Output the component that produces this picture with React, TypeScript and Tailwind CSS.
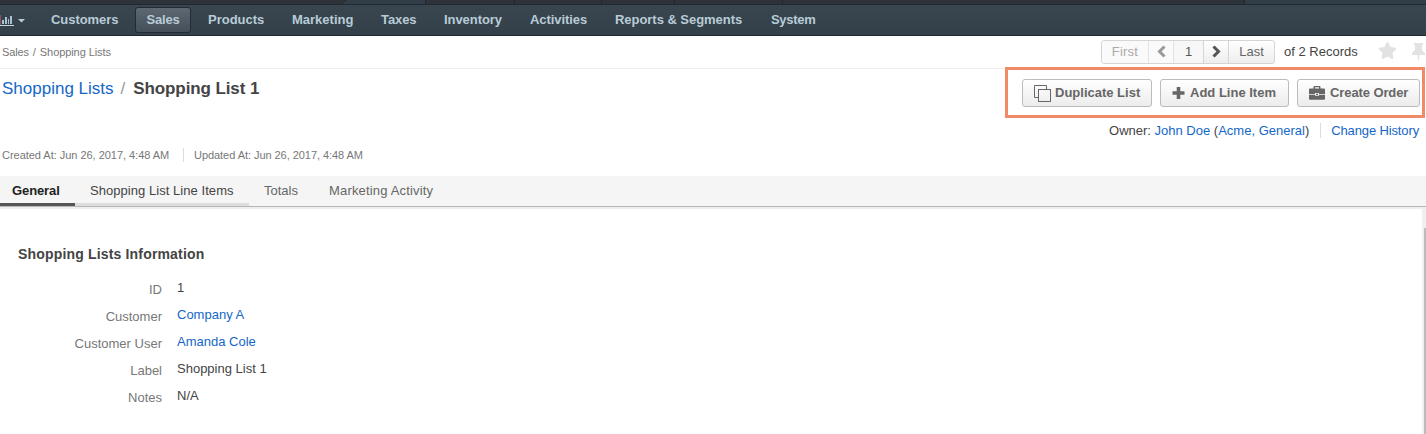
import React from "react";
import { FaStar } from "react-icons/fa";

const nav = [
  { label: "Products", w: "w-[84px]" },
  { label: "Marketing", w: "w-[89px]" },
  { label: "Taxes", w: "w-[63px] tracking-[-0.1px]" },
  { label: "Inventory", w: "w-[86px] tracking-[-0.06px]" },
  { label: "Activities", w: "w-[85px] tracking-[-0.06px]" },
  { label: "Reports & Segments", w: "w-[156px] tracking-[-0.04px]" },
  { label: "System", w: "w-[60px] tracking-[-0.3px]" },
];

const rows = [
  { label: "ID", value: "1", link: false },
  { label: "Customer", value: "Company A", link: true },
  { label: "Customer User", value: "Amanda Cole", link: true },
  { label: "Label", value: "Shopping List 1", link: false },
  { label: "Notes", value: "N/A", link: false },
];

function TopStrip() {
  return (
    <div className="flex h-1 bg-[#2e333a]">
      <svg className="h-1 w-[426px] shrink-0" viewBox="0 0 426 4">
        <path d="M346 0H425V4H342Z" fill="#333d47" />
        <path d="M346 0L342 4" stroke="#22282f" />
        <path d="M425.500 0V4" stroke="#1f262d" />
      </svg>
      <div className="w-[89px] shrink-0 border-r border-[#20262d]" />
      <div className="w-[87px] shrink-0 border-r border-[#20262d]" />
      <div className="w-[73px] shrink-0 border-r border-[#20262d]" />
      <div className="w-[108px] shrink-0 border-r border-[#20262d]" />
      <div className="w-[462px] shrink-0 border-r border-[#20262d]" />
      <div className="grow bg-[#333d47]" />
    </div>
  );
}

function NavBar() {
  return (
    <nav className="flex h-8 items-start border-t border-b border-[#1f2932] bg-linear-to-b from-[#3a464f] to-[#333f49] text-[13px] leading-[30px] font-bold text-[#b8ccd7]">
      <svg className="h-[30px] w-[51px] shrink-0" viewBox="0 0 51 30">
        <path d="M0 20.500H14" stroke="#c5d3dc" />
        <path d="M2 19V15H4V19ZM5 19V12H7V19ZM8 19V14H9V19ZM10 19V11H12V19Z" fill="#a9c2cf" />
        <path d="M.500 10V20" stroke="#88515c" />
        <path d="M18 14H25L21.500 17.500Z" fill="#b8ccd7" />
      </svg>
      <span className="w-[84px] shrink-0 tracking-[-0.06px]">Customers</span>
      <span className="mt-[2px] mr-[17px] h-[26px] w-[56px] shrink-0 rounded-[3px] border border-[#222b34] bg-linear-to-b from-[#5d6873] to-[#454f5a] text-center leading-[24px] tracking-[-0.2px]">
        Sales
      </span>
      {nav.map((n) => (
        <span key={n.label} className={`${n.w} shrink-0 whitespace-nowrap`}>
          {n.label}
        </span>
      ))}
    </nav>
  );
}

function Chevron({ right }: { right?: boolean }) {
  return (
    <svg className="-mt-[2px] h-[13px] w-[11px]" viewBox="0 0 11 13" fill="none" strokeWidth="3">
      {right ? (
        <path d="M2.500 1.500L7.500 6.500L2.500 11.500" stroke="#555" />
      ) : (
        <path d="M8.500 1.500L3.500 6.500L8.500 11.500" stroke="#999" />
      )}
    </svg>
  );
}

function Pager() {
  return (
    <div className="flex h-[32px] items-start pt-1 text-[13px] leading-[22px] text-[#444]">
      <div className="flex h-6 w-[174px] overflow-hidden rounded-[3px] border border-[#d5d5d5] bg-linear-to-b from-white to-[#eee] text-[#666]">
        <span className="w-[47px] border-r border-[#e2e2e2] bg-[#fafafa] text-center tracking-[0.2px] text-[#aaa]">First</span>
        <span className="flex w-[25px] items-center justify-center border-r border-[#e2e2e2] bg-[#fafafa]">
          <Chevron />
        </span>
        <span className="w-[30px] border-r border-[#d5d5d5] bg-[#f7f7f7] text-center text-[#555]">1</span>
        <span className="flex w-[25px] items-center justify-center border-r border-[#d5d5d5]">
          <Chevron right />
        </span>
        <span className="grow text-center">Last</span>
      </div>
      <span className="ml-[9px] w-[94px] whitespace-nowrap leading-6">of 2 Records</span>
      <FaStar className="mt-[1px] h-[19px] w-[19px] text-[#e2e2e2]" />
      <svg className="mt-[3px] ml-[14px] h-[18px] w-[15px]" viewBox="0 0 15 18" fill="#e2e2e2">
        <path d="M3 0H12V2H11V7L14 10V12H8.500L8 17H7L6.500 12H1V10L4 7V2H3Z" />
      </svg>
    </div>
  );
}

function ActionButton({ w, children }: { w: string; children: React.ReactNode }) {
  return (
    <button
      className={`${w} flex h-7 shrink-0 items-center rounded-[3px] border border-[#bbb] bg-linear-to-b from-white to-[#ececec] pl-[11px] text-[13px] font-bold whitespace-nowrap text-[#666]`}
    >
      {children}
    </button>
  );
}

function Actions() {
  return (
    <div className="-mt-[2px] mr-px flex h-[51px] w-[420px] shrink-0 items-start gap-2 border-3 border-[#f08a67] pt-[9px] pl-[14px]">
      <ActionButton w="w-[130px]">
        <svg className="mr-[4px] h-[17px] w-[17px]" viewBox="0 0 17 17" fill="none" stroke="#666">
          <path d="M4 12.500H.500V.500H12.500V4" />
          <rect x="4.500" y="4.500" width="12" height="12" />
        </svg>
        Duplicate List
      </ActionButton>
      <ActionButton w="w-[129px]">
        <svg className="mr-[5px] h-[13px] w-[13px]" viewBox="0 0 13 13" stroke="#666" strokeWidth="3.600">
          <path d="M6.500 0V12M.500 6H12.500" />
        </svg>
        Add Line Item
      </ActionButton>
      <ActionButton w="w-[123px]">
        <svg className="-mt-px mr-[5px] h-[14px] w-4" viewBox="0 0 16 14" fill="#666">
          <path d="M4.500 2.500V1Q4.500 0 5.500 0H10.500Q11.500 0 11.500 1V2.500H15Q16 2.500 16 3.500V8H10V7H6V8H0V3.500Q0 2.500 1 2.500ZM6 2.500H10V1.300H6Z" />
          <path d="M0 8.700H6V9.700H10V8.700H16V12.700Q16 13.700 15 13.700H1Q0 13.700 0 12.700ZM7 7.800H9V9H7Z" />
        </svg>
        <span className="tracking-[-0.1px]">Create Order</span>
      </ActionButton>
    </div>
  );
}

export default function App() {
  return (
    <div className="flex h-[434px] w-[1426px] flex-col overflow-hidden bg-white font-['Liberation_Sans',Arial,sans-serif] text-[13px] text-[#444]">
      <TopStrip />
      <NavBar />
      <div className="flex h-[33px] shrink-0 justify-between overflow-hidden border-b border-[#eee]">
        <div className="flex gap-1 pl-[2px] text-[11px] leading-8 text-[#777]">
          <span className="tracking-[-0.15px]">Sales</span>
          <span>/</span>
          <span className="tracking-[-0.08px]">Shopping Lists</span>
        </div>
        <Pager />
      </div>
      <div className="flex h-[49px] shrink-0 justify-between">
        <h1 className="pt-2 pl-[2px] text-[17px] leading-6 whitespace-nowrap">
          <a className="text-[#1567c8]">Shopping Lists</a>
          <span className="mr-2 ml-[7px] text-[#999]">/</span>
          <strong className="tracking-[-0.1px]">Shopping List 1</strong>
        </h1>
        <Actions />
      </div>
      <div className="flex h-[27px] shrink-0 justify-end pr-[7px] leading-[25px]">
        <span>
          Owner: <a className="text-[#1567c8]">John Doe</a> (<a className="text-[#1567c8]">Acme, General</a>)
        </span>
        <span className="mt-[5px] mr-[10px] ml-[11px] h-[15px] w-px bg-[#ddd]" />
        <a className="tracking-[-0.13px] text-[#1567c8]">Change History</a>
      </div>
      <div className="flex h-[31px] shrink-0 pl-[2px] text-[11px] leading-[20px] tracking-[-0.03px] text-[#777]">
        <span className="w-[167px] whitespace-nowrap">Created At: Jun 26, 2017, 4:48 AM</span>
        <span className="mt-[3px] mr-[10px] ml-[14px] h-[14px] w-px bg-[#ddd]" />
        <span className="tracking-[-0.05px]">Updated At: Jun 26, 2017, 4:48 AM</span>
      </div>
      <div className="flex h-[31px] shrink-0 border-b border-[#b7b7b7] bg-[#f5f5f5] leading-[29px] whitespace-nowrap text-[#666]">
        <span className="w-[75px] border-b-3 border-[#555] pl-3 font-bold tracking-[-0.1px] text-[#222]">General</span>
        <span className="w-[174px] border-b-3 border-[#ddd] pl-[15px] tracking-[0.05px] text-[#444]">Shopping List Line Items</span>
        <span className="w-[80px] pl-[15px]">Totals</span>
        <span className="tracking-[0.17px]">Marketing Activity</span>
      </div>
      <div className="flex grow border-t-2 border-[#efefef]">
        <main className="grow pt-[35px]">
          <h2 className="mb-[13px] pl-[18px] text-[14px] leading-5 font-bold tracking-[0.17px]">Shopping Lists Information</h2>
          {rows.map((r) => (
            <div key={r.label} className="flex h-[27px]">
              <span className="w-[162px] pt-[3px] text-right leading-5 text-[#777]">{r.label}</span>
              <span className={r.link ? "ml-[15px] leading-[22px] text-[#1567c8]" : "ml-[15px] leading-[22px]"}>{r.value}</span>
            </div>
          ))}
        </main>
        <div className="flex w-1 flex-col items-end bg-[#f0f0f0] pt-[19px]">
          <div className="w-[2px] grow bg-[#bcbcbc]" />
        </div>
      </div>
    </div>
  );
}
